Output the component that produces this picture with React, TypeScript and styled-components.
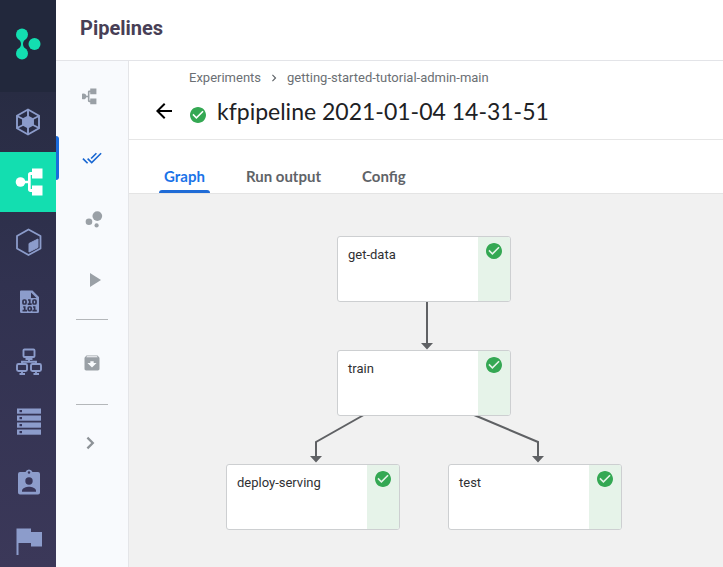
import React from "react";
import styled, { createGlobalStyle, css } from "styled-components";

const Global = createGlobalStyle`
  *, *::before, *::after { box-sizing: border-box; }
  body { margin: 0; font-family: Roboto, "Liberation Sans", sans-serif; background: #fff; overflow: hidden; }
`;

const Shell = styled.div`
  display: flex;
  height: 100vh;
  overflow: hidden;
`;

const Rail = styled.nav`
  flex: 0 0 56px;
  background: linear-gradient(#282c43 92px, #313250 50%, #3b3859);
  overflow: hidden;
`;

const LogoLink = styled.a`
  display: flex;
  align-items: center;
  justify-content: center;
  height: 92px;
  padding-bottom: 4px;
  background: #22283c;
`;

const RailLink = styled.a<{ $active?: boolean }>`
  display: flex;
  align-items: center;
  justify-content: center;
  height: 60px;
  padding-left: 2px;
  color: ${(p) => (p.$active ? "#fff" : "#8c9ccb")};
  background: ${(p) => (p.$active ? "#13deb0" : "transparent")};
`;

const Page = styled.div`
  flex: 1;
  min-width: 0;
  display: flex;
  flex-direction: column;
`;

const PageHeader = styled.header`
  flex: none;
  padding: 16px 24px 20px;
  border-bottom: 1px solid #e3e4e8;
`;

const PageTitle = styled.h2`
  margin: 0;
  font-size: 20px;
  line-height: 24px;
  font-weight: 700;
  color: #483f56;
`;

const Body = styled.div`
  flex: 1;
  min-height: 0;
  display: flex;
`;

const SideNav = styled.nav`
  flex: 0 0 73px;
  display: flex;
  flex-direction: column;
  align-items: stretch;
  padding-top: 5px;
  background: #f8fafd;
  border-right: 1px solid #e4e5e8;
`;

const SideLink = styled.a<{ $active?: boolean }>`
  display: flex;
  align-items: center;
  justify-content: center;
  height: 61px;
  color: ${(p) => (p.$active ? "#1967d2" : "#9aa0a6")};
  ${(p) =>
    p.$active &&
    css`
      &::before {
        content: "";
        width: 3px;
        height: 44px;
        margin-right: auto;
        border-radius: 0 4px 4px 0;
        background: #1a6bdc;
      }
      &::after {
        content: "";
        width: 3px;
        margin-left: auto;
      }
    `}
`;

const SideButton = styled.button`
  display: flex;
  align-items: center;
  justify-content: center;
  height: 76px;
  padding: 0;
  border: 0;
  background: none;
  color: #8d9297;
`;

const SideRule = styled.hr`
  width: 32px;
  height: 1px;
  margin: 9px auto 0;
  border: 0;
  background: #b4b7ba;
`;

const SideLinkTall = styled(SideLink)`
  height: 84px;
  padding-top: 2px;

  & + ${SideRule} { margin-top: 0; }
`;

const Main = styled.main`
  flex: 1;
  min-width: 0;
  display: flex;
  flex-direction: column;
`;

const RunHeader = styled.section`
  flex: none;
  padding: 7px 0 10px 23px;
  border-bottom: 1px solid #e6e6e6;
`;

const Crumbs = styled.nav`
  display: flex;
  align-items: center;
  gap: 6px;
  padding-left: 37px;
  font-size: 13px;
  line-height: 20px;
  color: #5f6368;
`;

const Crumb = styled.a`
  color: #6b6f74;
  text-decoration: none;
  white-space: nowrap;
`;

const TitleRow = styled.div`
  display: flex;
  align-items: center;
  padding-top: 5px;
`;

const BackButton = styled.button`
  display: flex;
  padding: 0;
  margin-right: 14px;
  border: 0;
  background: none;
  color: #000;
`;

const StatusMark = styled.span`
  display: flex;
  padding-top: 8px;
  margin-right: 11px;
`;

const RunTitle = styled.h1`
  margin: 0;
  font-family: Lato, sans-serif;
  font-size: 23px;
  line-height: 36px;
  font-weight: 400;
  color: #202124;
  white-space: nowrap;
`;

const Tabs = styled.div`
  flex: none;
  display: flex;
  gap: 21px;
  padding: 20px 0 0 25px;
`;

const Tab = styled.button<{ $active?: boolean }>`
  position: relative;
  height: 33px;
  padding: 0 10px 2px;
  border: 0;
  background: none;
  font-family: Lato, sans-serif;
  font-size: 15px;
  line-height: 30px;
  font-weight: 700;
  color: ${(p) => (p.$active ? "#1a73e8" : "#5f6368")};
  ${(p) =>
    p.$active &&
    css`
      &::after {
        content: "";
        position: absolute;
        left: 5px;
        right: 5px;
        bottom: 0;
        height: 3px;
        border-radius: 3px 3px 0 0;
        background: #1f6bd6;
      }
    `}
`;

const Canvas = styled.div`
  position: relative;
  flex: 1;
  min-height: 0;
  overflow: hidden;
  background: #f1f1f1;
  border-top: 1px solid #e4e4e4;
`;

const Edges = styled.svg`
  position: absolute;
  left: 0;
  top: 0;
`;

const Node = styled.button<{ $x: number; $y: number }>`
  position: absolute;
  left: ${(p) => p.$x}px;
  top: ${(p) => p.$y}px;
  display: flex;
  width: 174px;
  height: 66px;
  padding: 0;
  border: 1px solid #cdcfd1;
  border-radius: 3px;
  background: #fff;
  font-family: Roboto, sans-serif;
  font-size: 13px;
  line-height: 16px;
  text-align: left;
  color: #2f3033;
  overflow: hidden;
`;

const NodeName = styled.span`
  flex: 1;
  padding: 10px;
`;

const NodeState = styled.span`
  display: flex;
  justify-content: center;
  width: 32px;
  height: 100%;
  padding-top: 6px;
  background: #e6f3e9;
`;

const CheckCircle = () => (
  <svg width="16" height="16" viewBox="2 2 20 20" role="img" aria-label="Succeeded">
    <path fill="#34a853" d="M12 2C6.48 2 2 6.48 2 12s4.48 10 10 10 10-4.48 10-10S17.52 2 12 2zm-2 15l-5-5 1.41-1.41L10 14.17l7.59-7.59L19 8l-9 9z" />
  </svg>
);

const Material = ({ d, size }: { d: string; size: number }) => (
  <svg width={size} height={size} viewBox="0 0 24 24" fill="currentColor" aria-hidden="true">
    <path d={d} />
  </svg>
);

const PATHS = {
  back: "M20 11H7.83l5.59-5.59L12 4l-8 8 8 8 1.41-1.41L7.83 13H20v-2z",
  doneAll: "M18 7l-1.41-1.41-6.34 6.34 1.41 1.41L18 7zm4.24-1.41L11.66 16.17 7.48 12l-1.41 1.41L11.66 19l12-12-1.42-1.41zM.41 13.41L6 19l1.41-1.41L1.83 12 .41 13.41z",
  play: "M10 5v14l11-7z",
  archive: "M20.54 5.23l-1.39-1.68C18.88 3.21 18.47 3 18 3H6c-.47 0-.88.21-1.16.55L3.46 5.23C3.17 5.57 3 6.02 3 6.5V19c0 1.1.9 2 2 2h14c1.1 0 2-.9 2-2V6.5c0-.48-.17-.93-.46-1.27zM12 17.5L6.5 12H10v-2h4v2h3.5L12 17.5zM5.12 5l.81-1h12l.94 1H5.12z",
  chevron: "M10 6L8.59 7.41 13.17 12l-4.58 4.59L10 18l6-6z",
  expand: "M8.200 5.800L6.600 7.400 11.200 12l-4.600 4.600 1.600 1.600L14.400 12z",
};

const Logo = () => (
  <svg width="26" height="32" viewBox="0 0 26 32" fill="#13deb0" aria-hidden="true">
    <circle cx="7" cy="6.5" r="6" />
    <circle cx="7" cy="25.5" r="6" />
    <circle cx="19.500" cy="16" r="6" />
    <path d="M2.500 10.500C5 12 6 14 6 16s-1 4-3.500 5.500h9C9 20 8 18 8 16s1-4 3.500-5.500z" />
  </svg>
);

const HexGem = () => (
  <svg width="28" height="28" viewBox="0 0 28 28" fill="none" stroke="currentColor" strokeWidth="1.900" aria-hidden="true">
    <path d="M13 1.500l11 6.200v12.600l-11 6.200-11-6.200V7.700z" />
    <path d="M13 2v6M24 8l-6 3M24 20l-6-3M13 26v-6M2 20l6-3M2 8l6 3" />
    <path d="M13 8.500l5 2.800v5.400l-5 2.800-5-2.800v-5.400z" fill="currentColor" />
  </svg>
);

const PipelineIcon = ({ size, box = "0 0 28 28" }: { size: number; box?: string }) => (
  <svg width={size} height={size} viewBox={box} fill="currentColor" aria-hidden="true">
    <circle cx="5.500" cy="14" r="4.800" />
    <path d="M9 12.800h4V6.500c0-1.500 1-2.500 2.500-2.500H17V.500h10.500v10H17V7h-1.300v14H17v-3.500h10.500v10H17V24h-1.500c-1.500 0-2.500-1-2.500-2.500v-6.200H9z" />
  </svg>
);

const CubeIcon = () => (
  <svg width="28" height="28" viewBox="0 0 28 28" fill="none" stroke="currentColor" strokeWidth="1.800" strokeLinejoin="round" aria-hidden="true">
    <path d="M13.500 1.500l12 6.500v12.500l-12 6.500L2 20.500V8z" />
    <path d="M14 15.500l9-4.500v8.500L14 24z" fill="currentColor" strokeWidth="1" />
  </svg>
);

const BinaryFile = () => (
  <svg width="28" height="28" viewBox="0 0 28 28" aria-hidden="true">
    <path fill="currentColor" d="M6 2.500h11.500L24 9v14.500a1.500 1.500 0 0 1-1.500 1.500h-16A1.500 1.500 0 0 1 5 23.500v-20a1 1 0 0 1 1-1z" />
    <path fill="#31324f" d="M16 4.500V10h5.500z" />
    <g fill="none" stroke="#31324f" strokeWidth="1.700">
      <rect x="8" y="12" width="3" height="4" rx="1" />
      <path d="M13 12h1.700v4.500M12.700 16.200h4M8.200 19h1.500v4M7.500 22.700h4.500M18 19h1.600v4M17.400 22.700h4.400" />
      <rect x="18" y="12" width="3" height="4" rx="1" />
      <rect x="13.200" y="19" width="3" height="3.600" rx="1" />
    </g>
  </svg>
);

const ClusterIcon = () => (
  <svg width="28" height="28" viewBox="0 0 28 28" fill="none" stroke="currentColor" strokeWidth="1.900" aria-hidden="true">
    <rect x="8.500" y="1.500" width="11" height="7.500" rx="1" />
    <rect x="2" y="16" width="10" height="7" rx="1.500" />
    <rect x="16" y="16" width="10" height="7" rx="1.500" />
    <path d="M14 9v4M10.500 11h7M7 16v-2.200h14V16M7 23v3M4.500 26H10M21 23v3M18.500 26H24" />
  </svg>
);

const ServersIcon = () => (
  <svg width="28" height="28" viewBox="0 0 28 28" aria-hidden="true">
    {[0, 7, 14, 21].map((y) => (
      <React.Fragment key={y}>
        <rect x="2" y={y + 0.5} width="24" height="5.200" fill="currentColor" />
        <rect x="4.500" y={y + 2} width="2.500" height="2.200" fill="#34345a" />
      </React.Fragment>
    ))}
  </svg>
);

const BadgeIcon = () => (
  <svg width="28" height="28" viewBox="0 0 28 28" aria-hidden="true">
    <path fill="currentColor" d="M5 4h5.500a3.700 3.700 0 0 1 7 0H23a2 2 0 0 1 2 2v18.500a2 2 0 0 1-2 2H5a2 2 0 0 1-2-2V6a2 2 0 0 1 2-2z" />
    <g fill="#38365a">
      <circle cx="14" cy="4.500" r="1.200" />
      <circle cx="14" cy="13" r="3.700" />
      <path d="M7 23.800v-1.300c0-2.500 4.500-3.800 7-3.800s7 1.300 7 3.800v1.300z" />
    </g>
  </svg>
);

const FlagIcon = () => (
  <svg width="28" height="28" viewBox="0 0 28 28" fill="currentColor" aria-hidden="true">
    <path d="M1.500 .500H16V4h11v14.500H16V15H3.500v12h-2z" />
  </svg>
);

const Bubbles = () => (
  <svg width="22" height="22" viewBox="0 0 24 24" fill="currentColor" aria-hidden="true">
    <circle cx="8.700" cy="15" r="3.600" />
    <circle cx="17" cy="19" r="2.300" />
    <circle cx="17.800" cy="8.800" r="5.300" />
  </svg>
);

const NODES = [
  { name: "get-data", x: 208, y: 42 },
  { name: "train", x: 208, y: 156 },
  { name: "deploy-serving", x: 97, y: 270 },
  { name: "test", x: 319, y: 270 },
];

const RAIL = [
  { label: "Overview", icon: <HexGem /> },
  { label: "Pipelines", icon: <PipelineIcon size={28} />, active: true },
  { label: "Functions", icon: <CubeIcon /> },
  { label: "Data", icon: <BinaryFile /> },
  { label: "Clusters", icon: <ClusterIcon /> },
  { label: "Services", icon: <ServersIcon /> },
  { label: "Identity", icon: <BadgeIcon /> },
  { label: "Events", icon: <FlagIcon /> },
];

export default function App() {
  return (
    <>
      <Global />
      <Shell>
        <Rail aria-label="Primary">
          <LogoLink href="#home" aria-label="Home"><Logo /></LogoLink>
          {RAIL.map((item) => (
            <RailLink key={item.label} href="#" aria-label={item.label} $active={item.active}>
              {item.icon}
            </RailLink>
          ))}
        </Rail>
        <Page>
          <PageHeader><PageTitle>Pipelines</PageTitle></PageHeader>
          <Body>
            <SideNav aria-label="Pipelines sections">
              <SideLink href="#pipelines" aria-label="Pipelines"><PipelineIcon size={20} box="3 -2 34 34" /></SideLink>
              <SideLink href="#experiments" aria-label="Experiments" $active><Material d={PATHS.doneAll} size={20} /></SideLink>
              <SideLink href="#artifacts" aria-label="Artifacts"><Bubbles /></SideLink>
              <SideLink href="#executions" aria-label="Executions"><Material d={PATHS.play} size={24} /></SideLink>
              <SideRule />
              <SideLinkTall href="#archive" aria-label="Archive"><Material d={PATHS.archive} size={20} /></SideLinkTall>
              <SideRule />
              <SideButton aria-label="Expand"><Material d={PATHS.expand} size={24} /></SideButton>
            </SideNav>
            <Main>
              <RunHeader>
                <Crumbs aria-label="Breadcrumb">
                  <Crumb href="#experiments">Experiments</Crumb>
                  <Material d={PATHS.chevron} size={14} />
                  <Crumb href="#experiment">getting-started-tutorial-admin-main</Crumb>
                </Crumbs>
                <TitleRow>
                  <BackButton aria-label="Back"><Material d={PATHS.back} size={24} /></BackButton>
                  <StatusMark><CheckCircle /></StatusMark>
                  <RunTitle>kfpipeline 2021-01-04 14-31-51</RunTitle>
                </TitleRow>
              </RunHeader>
              <Tabs role="tablist">
                <Tab role="tab" aria-selected="true" $active>Graph</Tab>
                <Tab role="tab" aria-selected="false">Run output</Tab>
                <Tab role="tab" aria-selected="false">Config</Tab>
              </Tabs>
              <Canvas>
                <Edges width="600" height="400" fill="none" stroke="#5f6164" strokeWidth="2" aria-hidden="true">
                  <path d="M298 108v42M240 218L187 248v16M338 218L409 248v16" />
                  <path fill="#5f6164" stroke="none" d="M292 149h12l-6 6.500zM181 262h12l-6 6.500zM403 262h12l-6 6.500z" />
                </Edges>
                {NODES.map((n) => (
                  <Node key={n.name} $x={n.x} $y={n.y}>
                    <NodeName>{n.name}</NodeName>
                    <NodeState><CheckCircle /></NodeState>
                  </Node>
                ))}
              </Canvas>
            </Main>
          </Body>
        </Page>
      </Shell>
    </>
  );
}
